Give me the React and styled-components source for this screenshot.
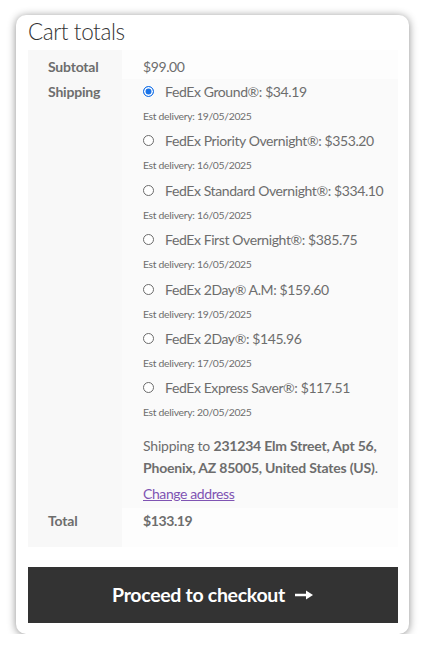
import styled, { createGlobalStyle } from "styled-components";

const GlobalStyle = createGlobalStyle`
    body {
        margin: 0;
        background: #fff;
        font-family: "Lato", "Liberation Sans", sans-serif;
        color: #6d6d6d;
    }
`

const Card = styled.div`
    margin: 15px 0 0 16px;
    width: 393px;
    height: 619px;
    box-sizing: border-box;
    padding: 0 11px 0 12px;
    background: #fff;
    border-radius: 10px;
    box-shadow: 0 1px 8px rgba(0, 0, 0, 0.45);
    overflow: hidden;
`

const Title = styled.h2`
    margin: 0;
    height: 32px;
    padding-top: 3px;
    font-size: 22.5px;
    font-weight: 300;
    color: #333;
    letter-spacing: -0.4px;
    line-height: 28px;
`

const Table = styled.table`
    width: 100%;
    border-collapse: collapse;
    font-size: 14px;
    letter-spacing: -0.4px;
`

const Th = styled.th`
    width: 74px;
    padding: 0 0 0 20px;
    background: #f8f8f8;
    text-align: left;
    vertical-align: top;
    font-weight: 700;
    color: #6d6d6d;
    letter-spacing: -0.2px;
    padding-top: ${p => p.$top || 0}px;
    padding-bottom: ${p => p.$bottom || 0}px;
`

const Td = styled.td`
    padding: 0 0 0 21px;
    background: ${p => (p.$alt ? "#fafafa" : "#fdfdfd")};
    vertical-align: top;
    padding-top: ${p => p.$top || 0}px;
    padding-bottom: ${p => p.$bottom || 0}px;
    font-weight: ${p => (p.$bold ? 700 : 400)};
`

const Line = styled.div`
    line-height: 25px;
`

const OptionList = styled.ul`
    list-style: none;
    margin: 0;
    padding: 0;
`

const Option = styled.li`
    height: 49.4px;
`

const OptionLabel = styled.label`
    display: flex;
    align-items: center;
    height: 25px;
    gap: 11px;
`

const Radio = styled.span`
    flex: none;
    width: 11px;
    height: 11px;
    border-radius: 50%;
    box-sizing: border-box;
    border: 1px solid #6b6b6b;
    background: #fff;
    ${p => p.$checked && `
        border: 1.5px solid #1a73e8;
        background: #1a73e8;
        box-shadow: inset 0 0 0 1.5px #fff;
    `}
`

const Est = styled.div`
    font-size: 10.4px;
    letter-spacing: -0.3px;
    line-height: 24px;
    color: #6d6d6d;
`

const Destination = styled.p`
    margin: 10px 0 0;
    line-height: 22px;
    letter-spacing: -0.2px;
    strong { font-weight: 700; }
`

const ChangeLink = styled.a`
    display: block;
    margin-top: 4px;
    line-height: 22px;
    color: #7f54b3;
    text-decoration: underline;
`

const Button = styled.button`
    margin-top: 20px;
    width: 100%;
    height: 56px;
    border: none;
    background: #333;
    color: #fff;
    font-family: inherit;
    font-size: 19.5px;
    font-weight: 700;
    display: flex;
    justify-content: center;
    align-items: center;
    gap: 10px;
    letter-spacing: -0.3px;
`

const Arrow = () => (
    <svg width="19" height="12" viewBox="0 0 19 12">
        <path d="M0 6h13" stroke="#fff" strokeWidth="2.4" />
        <path d="M11 1.5L18 6l-7 4.5z" fill="#fff" />
    </svg>
)

const options = [
    { name: "FedEx Ground®", price: "$34.19", date: "19/05/2025", checked: true },
    { name: "FedEx Priority Overnight®", price: "$353.20", date: "16/05/2025" },
    { name: "FedEx Standard Overnight®", price: "$334.10", date: "16/05/2025" },
    { name: "FedEx First Overnight®", price: "$385.75", date: "16/05/2025" },
    { name: "FedEx 2Day® A.M", price: "$159.60", date: "19/05/2025" },
    { name: "FedEx 2Day®", price: "$145.96", date: "17/05/2025" },
    { name: "FedEx Express Saver®", price: "$117.51", date: "20/05/2025" },
]

const App = () => {
    return (
        <>
            <GlobalStyle />
            <Card>
                <Title>Cart totals</Title>
                <Table>
                    <tbody>
                        <tr>
                            <Th $top={4}><Line>Subtotal</Line></Th>
                            <Td $top={4}><Line>$99.00</Line></Td>
                        </tr>
                        <tr>
                            <Th><Line>Shipping</Line></Th>
                            <Td $alt $bottom={3}>
                                <OptionList>
                                    {options.map(o => (
                                        <Option key={o.name}>
                                            <OptionLabel>
                                                <Radio $checked={o.checked} />
                                                <span>{o.name}: {o.price}</span>
                                            </OptionLabel>
                                            <Est>Est delivery: {o.date}</Est>
                                        </Option>
                                    ))}
                                </OptionList>
                                <Destination>
                                    Shipping to <strong>231234 Elm Street, Apt 56, Phoenix, AZ 85005, United States (US)</strong>.
                                </Destination>
                                <ChangeLink href="#">Change address</ChangeLink>
                            </Td>
                        </tr>
                        <tr>
                            <Th $bottom={14}><Line>Total</Line></Th>
                            <Td $bold $bottom={14}><Line>$133.19</Line></Td>
                        </tr>
                    </tbody>
                </Table>
                <Button>
                    Proceed to checkout <Arrow />
                </Button>
            </Card>
        </>
    )
}

export default App;
